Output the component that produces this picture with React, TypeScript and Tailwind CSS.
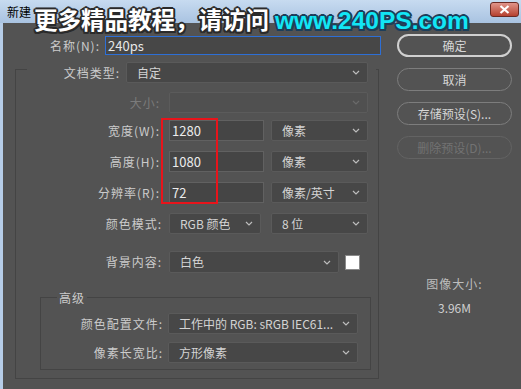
import React from 'react'

const cjk = "font-['Noto_Sans_CJK_SC','Noto_Sans',sans-serif]"

const Chevron: React.FC<{ dim?: boolean }> = ({ dim }) => (
  <svg width="8" height="5" viewBox="0 0 8 5" className="shrink-0">
    <polyline
      points="1,1 4,4 7,1"
      fill="none"
      stroke={dim ? '#6a6a6a' : '#bdbdbd'}
      strokeWidth="1.2"
    />
  </svg>
)

const Select: React.FC<{ value?: string; w: string; h?: string; disabled?: boolean }> = ({
  value,
  w,
  h = 'h-[21px]',
  disabled,
}) => (
  <div
    className={`${w} ${h} flex items-center justify-between rounded-[2px] border pl-[10px] pr-[7px] text-[12px] ${
      disabled ? 'border-[#5b5b5b] bg-[#505050]' : 'border-[#5a5a5a] bg-[#474747] text-[#d4d4d4]'
    }`}
  >
    <span className="truncate leading-[16px]">{value}</span>
    <Chevron dim={disabled} />
  </div>
)

const Field: React.FC<{ value: string }> = ({ value }) => (
  <div className="flex h-[21px] w-[95px] items-center border border-[#616161] bg-[#454545] pl-[2px] text-[13px] leading-[16px] text-[#ececec]">
    {value}
  </div>
)

const Label: React.FC<{ text: string; w: string; dim?: boolean }> = ({ text, w, dim }) => (
  <div
    className={`${w} shrink-0 whitespace-nowrap text-right text-[12px] leading-[16px] tracking-[1px] ${dim ? 'text-[#7b7b7b]' : 'text-[#cbcbcb]'}`}
  >
    {text}
  </div>
)

const Button: React.FC<{ text: string; primary?: boolean; disabled?: boolean }> = ({ text, primary, disabled }) => (
  <div
    className={`flex h-[23px] w-[115px] items-center justify-center rounded-full text-[12px] leading-[16px] ${
      primary
        ? 'border-2 border-[#d0d0d0] text-[#d6d6d6]'
        : disabled
          ? 'border border-[#636363] text-[#727272]'
          : 'border border-[#7d7d7d] text-[#d6d6d6]'
    }`}
  >
    {text}
  </div>
)

export default function App() {
  return (
    <div className={`relative h-[389px] w-[521px] overflow-hidden bg-[#b6cde8] ${cjk}`}>
      {/* title bar */}
      <div className="flex h-[23px] items-center justify-between bg-gradient-to-b from-[#c7dbf0] to-[#a9c3e1] pl-[7px] pr-[2px]">
        <span className="text-[12px] leading-[16px] text-black">新建</span>
        <div className="mt-[-4px] flex h-[15px] w-[29px] items-center justify-center rounded-[3px] border border-[#6b2a24] bg-gradient-to-b from-[#e0948a] to-[#b5402f]">
          <svg width="11" height="9" viewBox="0 0 11 9">
            <path d="M1.5 1 L9.5 8 M9.5 1 L1.5 8" stroke="#fff" strokeWidth="2.2" />
          </svg>
        </div>
      </div>

      {/* body */}
      <div className="ml-[3px] flex h-[366px] bg-[#535353]">
        <div className="w-[381px] shrink-0">
          {/* name */}
          <div className="mt-[13px] flex h-[19px] items-center">
            <Label text="名称(N):" w="w-[97px]" />
            <div className="ml-[5px] flex h-[19px] w-[276px] items-center border border-[#2d6fd6] bg-[#474747] pl-[2px] text-[13px] leading-[16px] text-[#e8e8e8]">
              240ps
            </div>
          </div>

          {/* preset group */}
          <div className="mt-[14px] ml-[12px] h-[310px] w-[364px] border border-[#444444]">
            <div className="mt-[-8px] ml-[11px] mr-[2px] flex items-center bg-[#535353] pr-[7px]">
              <Label text="文档类型:" w="w-[93px]" />
              <div className="ml-[6px]">
                <Select value="自定" w="w-[242px]" />
              </div>
            </div>

            <div className="mt-[9px] flex items-center">
              <Label text="大小:" w="w-[144px]" dim />
              <div className="ml-[9px]">
                <Select w="w-[199px]" disabled />
              </div>
            </div>

            <div className="relative">
              <div className="mt-[7px] flex items-center">
                <Label text="宽度(W):" w="w-[144px]" />
                <div className="ml-[9px] flex gap-[7px]">
                  <Field value="1280" />
                  <Select value="像素" w="w-[97px]" />
                </div>
              </div>
              <div className="mt-[10px] flex items-center">
                <Label text="高度(H):" w="w-[144px]" />
                <div className="ml-[9px] flex gap-[7px]">
                  <Field value="1080" />
                  <Select value="像素" w="w-[97px]" />
                </div>
              </div>
              <div className="mt-[10px] flex items-center">
                <Label text="分辨率(R):" w="w-[144px]" />
                <div className="ml-[9px] flex gap-[7px]">
                  <Field value="72" />
                  <Select value="像素/英寸" w="w-[97px]" />
                </div>
              </div>
              {/* red highlight */}
              <div className="absolute left-[145px] top-[-2px] h-[86px] w-[57px] border-2 border-[#e8141b]" />
            </div>

            <div className="mt-[10px] flex items-center">
              <Label text="颜色模式:" w="w-[146px]" />
              <div className="ml-[7px] flex gap-[10px]">
                <Select value="RGB 颜色" w="w-[92px]" />
                <Select value="8 位" w="w-[97px]" />
              </div>
            </div>

            <div className="mt-[17px] flex items-center">
              <Label text="背景内容:" w="w-[146px]" />
              <div className="ml-[7px] flex items-center gap-[6px]">
                <Select value="白色" w="w-[170px]" h="h-[22px]" />
                <div className="h-[15px] w-[15px] border border-[#8a8a8a] bg-white" />
              </div>
            </div>

            {/* advanced */}
            <div className="mt-[24px] ml-[24px] h-[73px] w-[331px] border border-[#444444]">
              <div className="mt-[-8px] ml-[16px] w-fit bg-[#535353] px-[2px] text-[12px] leading-[16px] tracking-[1px] text-[#cbcbcb]">
                高级
              </div>
              <div className="mt-[7px] flex items-center">
                <Label text="颜色配置文件:" w="w-[122px]" />
                <div className="ml-[5px]">
                  <Select value="工作中的 RGB: sRGB IEC61..." w="w-[190px]" />
                </div>
              </div>
              <div className="mt-[8px] flex items-center">
                <Label text="像素长宽比:" w="w-[122px]" />
                <div className="ml-[5px]">
                  <Select value="方形像素" w="w-[190px]" />
                </div>
              </div>
            </div>
          </div>
        </div>

        {/* right column */}
        <div className="ml-[13px] flex w-[115px] flex-col">
          <div className="mt-[11px] flex flex-col gap-[11px]">
            <Button text="确定" primary />
            <Button text="取消" />
            <Button text="存储预设(S)..." />
            <Button text="删除预设(D)..." disabled />
          </div>
          <div className="mt-[117px] text-center text-[12px] leading-[16px] tracking-[1px] text-[#bdbdbd]">图像大小:</div>
          <div className="mt-[8px] text-center text-[12px] leading-[16px] text-[#cfcfcf]">3.96M</div>
        </div>
      </div>

      {/* watermark */}
      <div className="pointer-events-none absolute left-[34px] top-[8px] flex items-baseline whitespace-nowrap font-bold leading-none">
        <span className="text-[23.5px] text-white [text-shadow:-1.5px_-1.5px_0_#2a2a2a,1.5px_-1.5px_0_#2a2a2a,-1.5px_1.5px_0_#2a2a2a,1.5px_1.5px_0_#2a2a2a,0_2px_0_#2a2a2a,2px_0_0_#2a2a2a,-2px_0_0_#2a2a2a,0_-2px_0_#2a2a2a]">
          更多精品教程，请访问
        </span>
        <span className="ml-[6px] font-['Liberation_Sans',sans-serif] text-[24.5px] text-[#12e6f5] [text-shadow:-1.5px_-1.5px_0_#1d3e5a,1.5px_-1.5px_0_#1d3e5a,-1.5px_1.5px_0_#1d3e5a,1.5px_1.5px_0_#1d3e5a,0_2px_0_#1d3e5a,2px_0_0_#1d3e5a,-2px_0_0_#1d3e5a,0_-2px_0_#1d3e5a]">
          www.240PS.com
        </span>
      </div>
    </div>
  )
}
